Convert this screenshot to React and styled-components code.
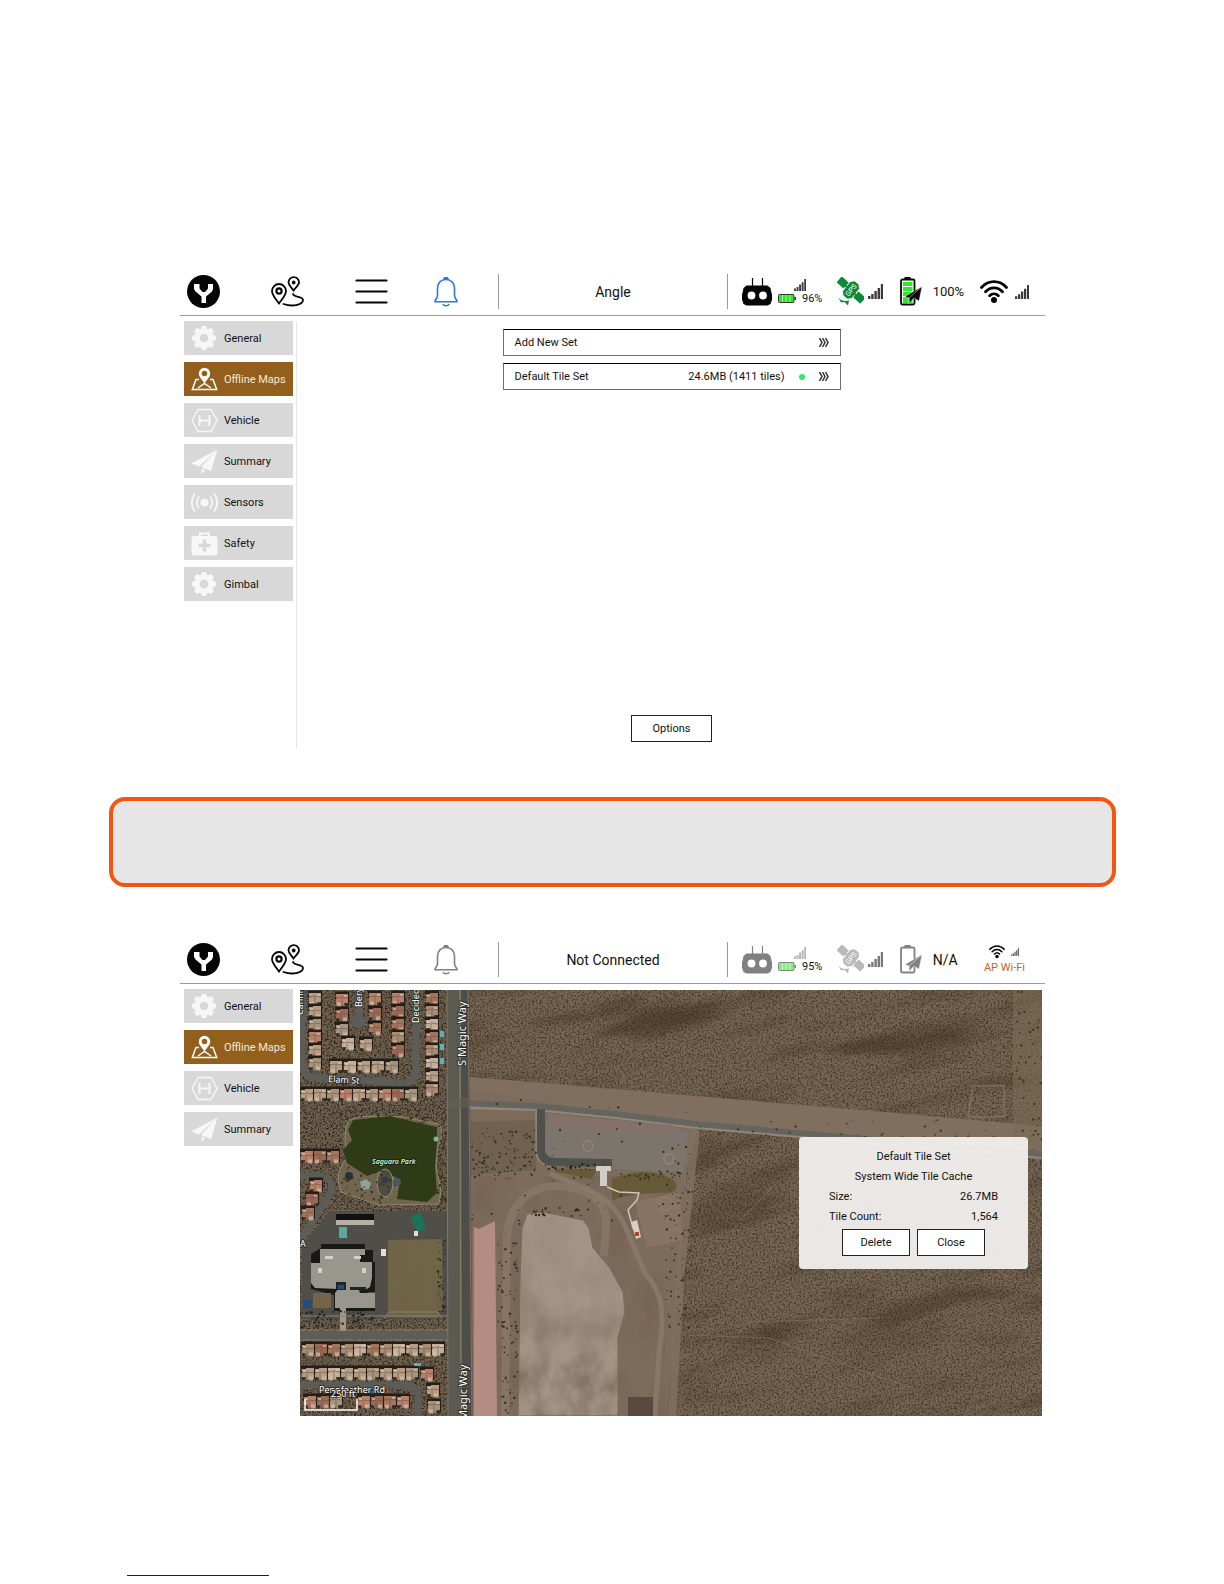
import React from 'react'
import styled, { createGlobalStyle } from 'styled-components'

const colors = {
  black: '#050505',
  text: '#111',
  brown: '#935f1c',
  orange: '#f4560f',
  amber: '#c4681c',
  blue: '#2b78e4',
  green: '#0c8a3a',
  lime: '#2ee82a',
  gray: '#808080',
  grayLight: '#d8d8d8',
  line: '#9b9b9b',
}

const GlobalStyle = createGlobalStyle`
  * {
    box-sizing: border-box;
  }

  body {
    background: #fff;
    color: ${colors.text};
    font-family: Roboto, 'Liberation Sans', sans-serif;
    font-size: 11px;
    margin: 0;
  }

  button {
    color: inherit;
    cursor: pointer;
    font: inherit;
    padding: 0;
  }

  svg {
    display: block;
    flex: none;
  }
`

const Page = styled.main`
  padding: 268px 108px 8px;
`

const Screen = styled.section`
  margin: 0 71px 0 72px;
`

const Header = styled.header`
  align-items: center;
  border-bottom: 1px solid ${colors.line};
  display: grid;
  grid-template-columns: 318fr 230fr 317fr;
  height: 48px;
`

const MainNav = styled.nav`
  align-items: center;
  display: grid;
  grid-template-columns: 84fr 84fr 79fr 64fr;
  justify-items: start;
  padding-left: 7px;
`

const IconButton = styled.button`
  background: none;
  border: 0;
`

const Title = styled.h1`
  border: solid ${colors.line};
  border-width: 0 1px;
  font-size: 14px;
  font-weight: 400;
  line-height: 33px;
  margin: 0;
  padding-top: 2px;
  text-align: center;
`

const StatusBar = styled.div`
  align-items: center;
  display: flex;
  justify-content: space-between;
  padding: 0 16px 0 14px;
`

const StatusGroup = styled.div`
  align-items: center;
  display: flex;
  gap: ${({ $gap }) => $gap}px;
  width: ${({ $width }) => $width}px;
`

const Stack = styled.div`
  align-items: ${({ $align }) => $align};
  display: flex;
  flex: 1;
  flex-direction: column;
  gap: 2px;
`

const StackRow = styled.div`
  align-items: center;
  display: flex;
  gap: 6px;
  line-height: 12px;
  padding-right: ${({ $inset }) => ($inset ? 16 : 0)}px;
`

const StatusText = styled.span`
  color: ${({ $color }) => $color || colors.text};
  font-size: ${({ $size }) => $size || 11}px;
  white-space: nowrap;
`

const Body = styled.div`
  align-items: start;
  display: grid;
  gap: 3px;
  grid-template-columns: 109px 1fr;
  padding: 5px 0 0 4px;
`

const SideNav = styled.nav`
  display: flex;
  flex-direction: column;
  gap: 7px;
`

const SideButton = styled.button`
  align-items: center;
  background: ${({ $active }) => ($active ? colors.brown : colors.grayLight)};
  border: 0;
  color: ${({ $active }) => ($active ? '#f5e9d8' : colors.text)};
  display: flex;
  gap: 6px;
  height: 34px;
  padding-left: 7px;
  white-space: nowrap;
`

const Panel = styled.div`
  align-items: center;
  border-left: 1px solid #e4e4e4;
  display: flex;
  flex-direction: column;
  gap: 7px;
  margin-top: 1px;
  min-height: 426px;
  padding: 7px 0 6px 1px;
`

const TileRow = styled.button`
  align-items: center;
  background: #fff;
  border: 1px solid #6f6f6f;
  border-top-color: #000;
  display: flex;
  gap: 14px;
  height: 27px;
  max-width: 100%;
  padding: 0 11px;
  width: 338px;
`

const TileName = styled.span`
  flex: 1;
  text-align: left;
`

const Dot = styled.span`
  background: #35e468;
  border-radius: 50%;
  height: 6px;
  width: 6px;
`

const OutlineButton = styled.button`
  background: #fff;
  border: 1px solid #222;
  height: 27px;
  width: ${({ $width }) => $width}px;
`

const PanelFooter = styled.div`
  margin-top: auto;
`

const Notice = styled.aside`
  background: #e6e6e6;
  border: 4px solid ${colors.orange};
  border-radius: 16px;
  height: 90px;
  margin: 49px 0 49px 1px;
`

const MapPanel = styled.div`
  margin: 1px 3px 0 4px;
  position: relative;
`

const Dialog = styled.div`
  background: rgba(241, 239, 237, 0.95);
  border-radius: 4px;
  line-height: 20px;
  padding: 10px 30px 13px;
  position: absolute;
  right: 14px;
  text-align: center;
  top: 147px;
  width: 229px;
`

const DialogTitle = styled.h2`
  font-size: 11px;
  font-weight: 400;
  margin: 0;
`

const Facts = styled.dl`
  display: grid;
  grid-template-columns: 1fr auto;
  margin: 0 0 2px;
  text-align: left;

  dd {
    margin: 0;
    text-align: right;
  }
`

const DialogActions = styled.div`
  display: flex;
  gap: 7px;
  justify-content: center;
`

const FootRule = styled.hr`
  border: 0;
  border-top: 1px solid #14148a;
  margin: 159px 0 0 19px;
  width: 142px;
`

const Logo = () => (
  <svg width="33" height="33" viewBox="0 0 33 33">
    <circle cx="16.5" cy="16.5" r="16.5" fill={colors.black} />
    <path d="M7 9h5.500v4.500l3 3.500h2.500l3-3.500V9H26v5l-1 2.500-6 5V28h-4.500v-6.500l-6-5L7 14z" fill="#fff" />
  </svg>
)

const RouteIcon = () => (
  <svg width="33" height="31" viewBox="0 0 33 31" fill="none" stroke={colors.black} strokeWidth="1.800">
    <path d="M8 27.500C5 23 1 19.500 1 15a7 7 0 0 1 14 0c0 4.500-4 8-7 12.500z" />
    <circle cx="8" cy="15" r="2.600" strokeWidth="2.200" />
    <path d="M22.500 14.500c-2-3-5-5-5-8.200a5.200 5.200 0 0 1 10.500 0c0 3.200-3.500 5.200-5.500 8.200z" />
    <circle cx="22.700" cy="6.500" r="1" />
    <path d="M22 18c1 3.500 10 2.500 10 6 0 4-9 7.500-19.500 4" strokeLinecap="round" />
  </svg>
)

const MenuIcon = () => (
  <svg width="33" height="25" viewBox="0 0 33 25" stroke={colors.black} strokeWidth="2.200" strokeLinecap="round">
    <path d="M1.500 1.500h30M1.500 12.500h30M1.500 23.500h30" />
  </svg>
)

const BellIcon = ({ color }) => (
  <svg width="24" height="30" viewBox="0 0 24 30" fill="none" stroke={color} strokeWidth="1.600">
    <path d="M1 24.800c-.7-1.500 2.500-3 2.500-6V11c0-5 3.500-8.500 8.500-8.500s8.500 3.500 8.500 8.500v7.800c0 3 3.200 4.500 2.500 6z" />
    <path d="M10 2.300a2 2 0 0 1 4 0z" fill={color} />
    <path d="M8.800 27.300c1.500 2 4.900 2 6.400 0" />
  </svg>
)

const ControllerIcon = ({ color }) => (
  <svg width="30" height="29" viewBox="0 0 30 29">
    <path d="M10.500 1v9M20.500 1v9" stroke={color} strokeWidth="1.200" />
    <path d="M4.500 8.500h21l3 2.500 1 5 .5 1v6l-.5 1-1 3-3 1.500h-21l-3-1.500-1-3L0 23v-6l.5-1 1-5z" fill={color} />
    <circle cx="9.500" cy="18.500" r="3.900" fill="#fff" />
    <circle cx="21" cy="18.500" r="3.900" fill="#fff" />
  </svg>
)

const SignalIcon = ({ width = 15, color = '#3b3b3b' }) => (
  <svg width={width} height={width} viewBox="0 0 15 15" fill={color}>
    <path d="M0 12h2.400v3H0zM3.200 10h2.400v5H3.200zM6.400 7h2.400v8H6.400zM9.600 4H12v11H9.600zM12.800 0H15v15h-2.200z" />
  </svg>
)

const LinkBattery = ({ muted }) => (
  <svg width="18" height="9" viewBox="0 0 18 9" opacity={muted ? 0.6 : 1}>
    <rect x=".5" y=".5" width="15.500" height="8" rx="1" fill={colors.lime} stroke="#333" />
    <path d="M4.500 1v7M8.200 1v7M12 1v7" stroke="#9af59a" />
    <path d="M16.500 3H18v3h-1.500z" fill="#333" />
  </svg>
)

const GpsIcon = ({ color }) => (
  <svg width="27" height="29" viewBox="0 0 27 29" fill={color}>
    <g transform="rotate(42 14 13)">
      <rect x="-2" y="9" width="9.500" height="8" />
      <rect x="20.500" y="9" width="9.500" height="8" />
      <path d="M6 13.500h17" stroke={color} strokeWidth="2" />
    </g>
    <g transform="rotate(-52 14 13)">
      <path d="M8 7.500h12l3 3v5l-3 3H8l-3-3v-5z" />
      <text x="14" y="15.500" textAnchor="middle" fontSize="7" fill="#fff">
        GPS
      </text>
    </g>
    <path d="M0 18c2 5 6 7 12 5.500L11 28.500 7.500 25l-3.500.5z" />
  </svg>
)

const VehicleBattery = ({ color, level }) => (
  <svg width="22" height="29" viewBox="0 0 22 29">
    <rect x="1" y="2.500" width="13.500" height="25" rx="1.500" fill="#fff" stroke={color} strokeWidth="1.800" />
    <rect x="4.500" y="0" width="6" height="2.500" fill={color} />
    {level && <path d="M3 5h9.500v4H3zM3 10h9.500v4H3zM3 15h9.500v4H3zM3 20h9.500v6H3z" fill={colors.lime} />}
    <path d="M22 9.500L19 24l-5-3-5 5.500V21l-4-1.500z" fill={color} stroke="#fff" strokeWidth=".4" />
    <path d="M22 9.500L9 21v5" stroke="#fff" strokeWidth=".5" fill="none" />
  </svg>
)

const WifiIcon = ({ width = 28 }) => (
  <svg width={width} height={(width * 23) / 28} viewBox="0 0 28 23" fill="none" stroke={colors.black}>
    <g strokeWidth="2.800" strokeLinecap="round">
      <path d="M1.500 7.500C8.500-.3 19.500-.3 26.500 7.500" />
      <path d="M5.500 11.800c5-5.200 12-5.200 17 0" />
      <path d="M9.600 15.800c2.600-2.600 6.200-2.600 8.800 0" />
    </g>
    <circle cx="14" cy="20" r="3" fill={colors.black} stroke="none" />
  </svg>
)

const ChevronsIcon = () => (
  <svg width="10" height="9" viewBox="0 0 10 9" fill="none" stroke="#333" strokeWidth="1.500">
    <path d="M.5 0l2.500 4.500L.5 9M3.500 0L6 4.500 3.500 9M6.500 0L9 4.500 6.500 9" />
  </svg>
)

const SideIcon = ({ children }) => (
  <svg width="27" height="27" viewBox="0 0 27 27" fill="#f7f7f7" stroke="none">
    {children}
  </svg>
)

const GearIcon = () => (
  <SideIcon>
    {[0, 45, 90, 135].map(angle => (
      <path key={angle} d="M11 1h4l1.500 4v16L15 25h-4l-1.500-4V5z" transform={`rotate(${angle} 13 13)`} />
    ))}
    <circle cx="13" cy="13" r="9.500" />
    <circle cx="13" cy="13" r="4.300" fill={colors.grayLight} />
  </SideIcon>
)

const MapsIcon = () => (
  <SideIcon>
    <path d="M13.500 17.500C11 13.500 7.800 11 7.800 7.500a5.700 5.700 0 0 1 11.400 0c0 3.500-3.200 6-5.700 10z" fill="#fff" />
    <circle cx="13.500" cy="7.500" r="2.800" fill={colors.brown} />
    <path d="M8 13.500H5L1.300 23.500h24.400L22 13.500h-3M7 22l6.500-4.500L20 22" fill="none" stroke="#fff" strokeWidth="1.500" />
  </SideIcon>
)

const VehicleIcon = () => (
  <SideIcon>
    <g fill="none" stroke="#f7f7f7">
      <path d="M1 13.500L7 2.500h13l6 11-6 11H7z" strokeWidth="1.400" />
      <path d="M8.500 8v11M18.500 8v11M8.500 13.500h10" strokeWidth="2" />
    </g>
  </SideIcon>
)

const SummaryIcon = () => (
  <SideIcon>
    <path d="M26.500 1.500L0 15.500l8 3zM26.500 1.500L10 19l10 4zM10.500 20.500V26l4-3.800z" />
  </SideIcon>
)

const SensorsIcon = () => (
  <SideIcon>
    <circle cx="13.500" cy="13.500" r="4" />
    <g fill="none" stroke="#f7f7f7" strokeWidth="1.800">
      <path d="M8 7.500c-3 3.500-3 8.500 0 12M19 7.500c3 3.500 3 8.500 0 12" />
      <path d="M4 4.500c-4.200 5.300-4.200 12.700 0 18M23 4.500c4.200 5.300 4.200 12.700 0 18" />
    </g>
  </SideIcon>
)

const SafetyIcon = () => (
  <SideIcon>
    <path d="M9 7V3.500h9V7" fill="none" stroke="#f7f7f7" strokeWidth="2" />
    <rect x=".5" y="6" width="26" height="19.500" rx="3" />
    <path d="M13.500 9.500v12M7.500 15.500h12" stroke={colors.grayLight} strokeWidth="3.500" />
  </SideIcon>
)

const sideIcons = {
  General: GearIcon,
  'Offline Maps': MapsIcon,
  Vehicle: VehicleIcon,
  Summary: SummaryIcon,
  Sensors: SensorsIcon,
  Safety: SafetyIcon,
  Gimbal: GearIcon,
}

// small repeatable generator, so the scattered shrubs stay put between renders
const scatter = (count, seed, [x0, y0, x1, y1]) => {
  let s = seed
  const next = () => {
    s = (s * 16807) % 2147483647
    return s / 2147483647
  }
  return Array.from({ length: count }, () => ({
    x: x0 + next() * (x1 - x0),
    y: y0 + next() * (y1 - y0),
    r: 0.4 + next() * 0.9,
  }))
}

const roofs = ['#b59c85', '#a3745a', '#a8937e', '#c4b09a', '#9c6855', '#b79c80', '#a98b74', '#ba7f6a']

const column = (x, y0, y1, step = 13) => {
  const list = []
  for (let y = y0; y <= y1; y += step) list.push([x, y])
  return list
}

const row = (y, x0, x1, step = 13) => {
  const list = []
  for (let x = x0; x <= x1; x += step) list.push([x, y])
  return list
}

const houses = [
  ...column(9, 3, 68),
  ...column(36, 4, 40, 15),
  ...column(69, 3, 40, 15),
  ...column(92, 3, 64),
  ...column(126, 3, 105),
  [42, 48],
  [60, 49],
  ...row(71, 30, 98, 14),
  ...row(99, 1, 112),
  ...row(161, 1, 27),
  [10, 190],
  [6, 204],
  [2, 218],
  ...row(354, 2, 134),
  ...row(378, 2, 114),
  [121, 379],
  [127, 395],
  [128, 411],
  ...row(406, 4, 30),
  ...row(406, 58, 100),
]

// each lot is a roof with its shadow, a drive and a bit of planting
const House = ({ x, y, roof, flip }) => (
  <g transform={`translate(${x} ${y})`}>
    <path d="M-1-2.500h14v4H-1zM11.500 0h1.500v11h-1.500z" fill="#231f18" />
    <path d={flip ? 'M0 0h12v9H8v2.500H0z' : 'M0 1h4V0h8v11.500H4V9H0z'} fill={roof} />
    <path d={flip ? 'M0 4l6-1 6 1M6 3v8' : 'M0 5l5-1 7 1M5 5v6'} fill="none" stroke="#6a5445" strokeWidth=".6" />
    <path d={flip ? 'M1 8.500h4v4H1z' : 'M7 8.500h4v4H7z'} fill="#cfc1ae" opacity=".7" />
    <path d={flip ? 'M8 1h3v2H8z' : 'M1 2h3v2H1z'} fill="#e0d5c5" opacity=".5" />
    <circle cx={flip ? 10.5 : 1.5} cy="11" r="1.400" fill="#28301c" />
    <circle cx="-.5" cy="4" r="1" fill="#28301c" />
  </g>
)

const Shrubs = ({ items, color = '#39341f' }) => (
  <g fill={color}>
    {items.map(({ x, y, r }, i) => (
      <circle key={i} cx={x} cy={y} r={r} />
    ))}
  </g>
)

const MapLabel = styled.text`
  fill: #fff;
  font-family: 'Noto Sans', 'Open Sans', sans-serif;
  font-size: ${({ $size }) => $size || 9}px;
  paint-order: stroke;
  stroke: rgba(25, 25, 20, 0.65);
  stroke-width: 2px;
`

const ParkLabel = styled(MapLabel)`
  fill: #c9f2c6;
  font-style: italic;
  font-weight: 600;
`

const AerialSvg = styled.svg`
  height: auto;
  width: 100%;
`

const AerialMap = () => (
  <AerialSvg viewBox="0 0 742 426" role="img" aria-label="Aerial map">
    <defs>
      <filter id="grain" x="0" y="0" width="100%" height="100%" colorInterpolationFilters="sRGB">
        <feTurbulence type="fractalNoise" baseFrequency=".55" numOctaves="3" seed="4" />
        <feColorMatrix values="0 0 0 0 .18  0 0 0 0 .14  0 0 0 0 .09  3.200 0 0 0 -1.400" />
      </filter>
      <filter id="ridges" x="0" y="0" width="100%" height="100%" colorInterpolationFilters="sRGB">
        <feTurbulence type="fractalNoise" baseFrequency=".008 .04" numOctaves="4" seed="9" />
        <feColorMatrix values="0 0 0 0 .26  0 0 0 0 .19  0 0 0 0 .12  3 0 0 0 -1.450" />
      </filter>
      <filter id="dust" x="0" y="0" width="100%" height="100%" colorInterpolationFilters="sRGB">
        <feTurbulence type="fractalNoise" baseFrequency=".03 .02" numOctaves="5" seed="2" />
        <feColorMatrix values="0 0 0 0 .42  0 0 0 0 .35  0 0 0 0 .29  2 0 0 0 -.8" />
      </filter>
      <filter id="soften">
        <feGaussianBlur stdDeviation="5 3" />
      </filter>
      <linearGradient id="fade" x2="0" y2="1">
        <stop offset="0" stopColor="#fff" stopOpacity=".15" />
        <stop offset=".5" stopColor="#fff" stopOpacity=".35" />
        <stop offset=".8" stopColor="#fff" />
      </linearGradient>
      <mask id="field">
        <path d="M227 224l16-2 40 8 6 8 4 20 17 20 13 24 2 20-7 26v78H218l2-137 2-50z" fill="url(#fade)" />
      </mask>
    </defs>

    {/* open desert */}
    <rect width="742" height="426" fill="#766653" />
    <g transform="rotate(-14 560 210)">
      <rect x="120" y="-100" width="720" height="640" filter="url(#ridges)" opacity=".4" />
    </g>
    <g fill="#4a3822" opacity=".45" filter="url(#soften)">
      <path d="M222 36q30-14 68-14 30-16 60-14l-30 18-60 8zM288 44q40-14 60-24 50-6 80-14l-20 20-50 22zM520 60q50-20 90-10 30-14 60-4l-60 20z" />
      <path d="M560 330q60-30 120-34l50 8-80 10-60 26zM450 340q30-14 60-8l-40 20z" />
    </g>
    <rect width="742" height="426" filter="url(#grain)" opacity=".65" />

    {/* cleared ground */}
    <path d="M160 86l424 36 158 14v28l-345-25-10 40-20 247H160z" fill="#806e5f" />
    <path d="M160 132l76-2v50l-76 6z" fill="#6b5b4a" opacity=".7" />
    <path d="M168 100l216 34v292H168z" fill="#75624f" opacity=".25" />
    <rect x="168" y="186" width="198" height="240" filter="url(#dust)" opacity=".45" />
    <path d="M713 0h29v158l-29-3z" fill="#7c6a55" opacity=".6" />
    <path d="M673 96h31v31h-36z" fill="none" stroke="#8d7963" strokeWidth="1.500" opacity=".7" />
    <path d="M396 140l-16 148-8 138" fill="none" stroke="#857261" strokeWidth="8" opacity=".8" />
    <path d="M390 390l60-58 130-4M388 345l80 3 150 52M440 230l40-40" fill="none" stroke="#87735d" strokeWidth="1" opacity=".6" />

    {/* tracks around the field */}
    <path d="M205 426l2-180c2-30 22-50 50-50 40 3 50 20 49 40l-2 30" fill="none" stroke="#8a7868" strokeWidth="8" opacity=".8" />
    <path d="M250 184c35 14 60 20 75 52l20 47c18 20 20 40 14 80l-4 63" fill="none" stroke="#8c7a6b" strokeWidth="5" opacity=".8" />
    <path d="M335 212l45-10 2 48-35 8z" fill="#887464" />
    <path d="M227 224l16-2 40 8 6 8 4 20 17 20 13 24 2 20-7 26v78H218l2-137 2-50z" fill="#a39385" stroke="#7c6b58" />
    <g mask="url(#field)">
      <rect x="215" y="220" width="115" height="206" filter="url(#dust)" />
    </g>
    <path d="M174 237l5 2 16-8 2 195h-24z" fill="#b48d82" />
    <path d="M173 240v186" stroke="#9c665d" strokeWidth="1.500" />
    <path d="M328 407h25v19h-25z" fill="#5a4941" />

    {/* access road and lot */}
    <path d="M167 115l70 2 80 8 80 10 345 30" fill="none" stroke="#938677" strokeWidth="8" />
    <path d="M160 113l77 3 80 8 80 10 345 30" fill="none" stroke="#65645e" strokeWidth="6" />
    <path d="M248 124l124 11 16 8-5 39-71-3 1-7-62-4-8-6z" fill="#7c756d" />
    <path d="M250 125l122 11 10 8-80-3-52-5z" fill="#87706a" opacity=".7" />
    <circle cx="288" cy="156" r="5" fill="none" stroke="#8a8278" strokeWidth="2" />
    <circle cx="369" cy="169" r="5" fill="none" stroke="#8d8275" strokeWidth="2" />
    <path d="M241 119v40q0 13 15 13l56 1" fill="none" stroke="#4e514c" strokeWidth="8" />
    <path d="M236 121v40q1 13 15 17" fill="none" stroke="#a19686" />
    <path d="M255 179h42l-5 10-36-7zM312 189q35-14 60 0 10 8-2 14-30-2-58 7z" fill="#665a38" />
    <path d="M296 176h15v5h-4v15h-7v-15h-4z" fill="#d2cdc4" />
    <path d="M307 197l12 5 20 1-2 7-9 10 5 18 5 8" fill="none" stroke="#cfc5b5" strokeWidth="1.500" />
    <path d="M331 232l6-2 4 17-5 2z" fill="#d8d0c4" />
    <path d="M335 242h4v4h-4z" fill="#b2442c" />
    <circle cx="365" cy="214" r="7" fill="none" stroke="#98826f" />
    <Shrubs items={scatter(110, 71, [172, 140, 236, 190])} />
    <Shrubs items={scatter(26, 15, [248, 174, 296, 180])} color="#262c16" />
    <Shrubs items={scatter(24, 27, [325, 182, 380, 190])} color="#2d321a" />
    <Shrubs items={scatter(90, 52, [366, 150, 390, 340])} />
    <Shrubs items={scatter(90, 31, [198, 240, 218, 426])} />
    <Shrubs items={scatter(25, 44, [232, 218, 288, 226])} color="#2d2d18" />
    <Shrubs items={scatter(60, 83, [172, 110, 400, 240])} />
    <Shrubs items={scatter(70, 93, [400, 130, 742, 160])} color="#3f3a22" />
    <Shrubs items={scatter(50, 18, [712, 0, 742, 150])} color="#3f3a22" />

    {/* neighbourhood */}
    <rect width="160" height="426" fill="#6e6150" />
    <rect width="160" height="426" filter="url(#grain)" />
    <g fill="none" stroke="#5c5c58" strokeWidth="7">
      <path d="M2 0v74q0 12 12 13l86 6q16 1 16-12V0" />
      <path d="M59 0v28" />
      <path d="M0 186h22q14 4 8 18L0 250" />
      <path d="M0 395h106q12 1 12 12v19" />
    </g>
    <circle cx="58" cy="31" r="7.500" fill="#5c5c58" />
    {houses.map(([x, y], i) => (
      <House key={i} x={x} y={y} flip={i % 3 === 0} roof={roofs[(i * 5 + (i >> 2)) % roofs.length]} />
    ))}
    <g fill="#55b3bd">
      <rect x="140" y="41" width="4" height="6" />
      <rect x="140" y="54" width="4" height="6" />
      <rect x="140" y="68" width="4" height="6" />
      <rect x="114" y="373" width="7" height="3" />
    </g>

    {/* park */}
    <path d="M46 136q2-10 24-10l34 1 34 7q8 8 0 22l-2 20 5 24-2 14-60 1-38-13q-9-20 8-36-6-10-3-30z" fill="#716550" stroke="#8f8a6c" />
    <path d="M53 130l37-4 33 8 14 3v14l-2 26 2 26-10 9-30-3 3-19-17-10-16 6-20-13-4-13 9-10-4-10z" fill="#2f3b17" />
    <ellipse cx="85" cy="193" rx="8" ry="14" fill="#4f4d42" stroke="#928d74" />
    <circle cx="85" cy="190" r="3.500" fill="#343b4d" />
    <circle cx="49" cy="186" r="4" fill="#22333b" />
    <path d="M60 192l6-3 5 4-2 6-7 1z" fill="#8aa595" />
    <circle cx="97" cy="192" r="4" fill="#4a575f" />
    <circle cx="136" cy="149" r="2.500" fill="#7bb3a5" />
    <Shrubs items={scatter(60, 87, [42, 176, 95, 214])} />
    <Shrubs items={scatter(60, 65, [40, 120, 146, 134])} />
    <Shrubs items={scatter(60, 29, [138, 136, 148, 218])} />

    {/* school */}
    <path d="M30 221h118v108H2v-74z" fill="#504e48" />
    <path d="M36 224h38v6H36z" fill="#11110f" />
    <path d="M36 230h38v5H36z" fill="#b5b1a7" />
    <path d="M39 237h8v11h-8z" fill="#57aa9c" />
    <path d="M111 227l9-5 6 16-9 4z" fill="#197558" />
    <path d="M114 241h4v5h-4zM81 259h5v7h-5z" fill="#e2dfd5" />
    <path d="M88 250l54-1 1 70-6 9-49-1z" fill="#716547" />
    <rect x="88" y="249" width="55" height="79" filter="url(#dust)" opacity=".5" />
    <path d="M21 254h44v6h8v12h2v30h-8l8 5v14H34v-16l-23-6v-35l10-6z" fill="#191917" />
    <path d="M20 259h45v6h-5v7h12v16l-2 9-5 3h-6l1 3h15v15H35v-15l3-4-23-1-4-5v-20h9z" fill="#99968d" />
    <path d="M25 266h8v3h-8zM54 266h7v3h-7zM18 278h4v5h-4zM62 278h4v5h-4z" fill="#d5d1c6" />
    <path d="M36 292h10v8H36zM50 297h16v3H50z" fill="#1c252a" />
    <path d="M38 295h6v4h-6zM3 310h9v8H3z" fill="#254c7d" />
    <path d="M13 303h18v15H13z" fill="#766448" />
    <path d="M40 318h6v23h-6z" fill="#a39786" />
    <path d="M2 326h148M84 329l5-7h48l6 8" fill="none" stroke="#8a8173" />
    <Shrubs items={scatter(90, 37, [2, 319, 84, 340])} color="#24221c" />
    <Shrubs items={scatter(36, 41, [138, 250, 145, 330])} color="#292d18" />
    <path d="M0 345h152" stroke="#5e5d58" strokeWidth="8" />
    <path d="M0 340h150M0 350h150" stroke="#8c8171" />

    {/* main street */}
    <path d="M147 0h20l3 426h-22z" fill="#5b5a50" />
    <path d="M161 0h8l4 426h-12z" fill="#4d4e4a" />
    <path d="M147 0l1 426M168 0l4 426" stroke="#807766" strokeWidth="1" />
    <path d="M160 0l1 426" stroke="#827c63" strokeWidth="1.500" />
    <path d="M148 113h22" stroke="#646057" strokeWidth="10" opacity=".6" />

    <MapLabel transform="rotate(3 28 92)" x="28" y="92">Elam St</MapLabel>
    <MapLabel transform="rotate(-90 62 17)" x="62" y="17">Bery</MapLabel>
    <MapLabel transform="rotate(-90 119 33)" x="119" y="33">Decided</MapLabel>
    <MapLabel transform="rotate(-90 3 25)" x="3" y="25">Cannin</MapLabel>
    <MapLabel $size={11} transform="rotate(-90 166 76)" x="166" y="76">S Magic Way</MapLabel>
    <MapLabel $size={11} transform="rotate(-90 167 439)" x="167" y="439">S Magic Way</MapLabel>
    <MapLabel x="0" y="257">A</MapLabel>
    <MapLabel x="19" y="403">Pennfeather Rd</MapLabel>
    <ParkLabel $size={7} x="72" y="174">Saguaro Park</ParkLabel>
    <MapLabel x="31" y="407">250 ft</MapLabel>
    <path d="M5 409v11h52v-11" fill="none" stroke="#fff" strokeWidth="1.500" />
  </AerialSvg>
)

const TopBar = ({ title, connected, linkBattery, vehicleBattery }) => (
  <Header>
    <MainNav aria-label="Main">
      <IconButton aria-label="Home"><Logo /></IconButton>
      <IconButton aria-label="Missions"><RouteIcon /></IconButton>
      <IconButton aria-label="Menu"><MenuIcon /></IconButton>
      <IconButton aria-label="Notifications">
        <BellIcon color={connected ? colors.blue : colors.gray} />
      </IconButton>
    </MainNav>
    <Title>{title}</Title>
    <StatusBar>
      <StatusGroup $width={80} $gap={6}>
        <ControllerIcon color={connected ? colors.black : colors.gray} />
        <Stack $align="flex-end">
          <StackRow $inset>
            <SignalIcon width={12} color={connected ? undefined : '#b5b5b5'} />
          </StackRow>
          <StackRow>
            <LinkBattery muted={!connected} />
            <StatusText>{linkBattery}</StatusText>
          </StackRow>
        </Stack>
      </StatusGroup>
      <StatusGroup $width={47} $gap={4}>
        <GpsIcon color={connected ? colors.green : '#b9b9b9'} />
        <SignalIcon color={connected ? undefined : '#777'} />
      </StatusGroup>
      <StatusGroup $width={65} $gap={11}>
        <VehicleBattery color={connected ? colors.black : colors.gray} level={connected} />
        <StatusText $size={connected ? 13 : 14}>{vehicleBattery}</StatusText>
      </StatusGroup>
      <StatusGroup $width={49} $gap={7}>
        {connected ? (
          <>
            <WifiIcon />
            <SignalIcon width={14} />
          </>
        ) : (
          <Stack $align="center">
            <StackRow>
              <WifiIcon width={16} />
              <SignalIcon width={8} color="#666" />
            </StackRow>
            <StatusText $color={colors.amber}>AP Wi-Fi</StatusText>
          </Stack>
        )}
      </StatusGroup>
    </StatusBar>
  </Header>
)

const SideMenu = ({ items }) => (
  <SideNav aria-label="Settings">
    {items.map(name => {
      const Icon = sideIcons[name]
      return (
        <SideButton key={name} $active={name === 'Offline Maps'}>
          <Icon />
          {name}
        </SideButton>
      )
    })}
  </SideNav>
)

const App = () => (
  <>
    <GlobalStyle />
    <Page>
      <Screen>
        <TopBar title="Angle" connected linkBattery="96%" vehicleBattery="100%" />
        <Body>
          <SideMenu items={['General', 'Offline Maps', 'Vehicle', 'Summary', 'Sensors', 'Safety', 'Gimbal']} />
          <Panel>
            <TileRow>
              <TileName>Add New Set</TileName>
              <ChevronsIcon />
            </TileRow>
            <TileRow>
              <TileName>Default Tile Set</TileName>
              <span>24.6MB (1411 tiles)</span>
              <Dot />
              <ChevronsIcon />
            </TileRow>
            <PanelFooter>
              <OutlineButton $width={81}>Options</OutlineButton>
            </PanelFooter>
          </Panel>
        </Body>
      </Screen>
      <Notice />
      <Screen>
        <TopBar title="Not Connected" linkBattery="95%" vehicleBattery="N/A" />
        <Body>
          <SideMenu items={['General', 'Offline Maps', 'Vehicle', 'Summary']} />
          <MapPanel>
            <AerialMap />
            <Dialog role="dialog" aria-labelledby="tile-set-title">
              <DialogTitle id="tile-set-title">Default Tile Set</DialogTitle>
              <div>System Wide Tile Cache</div>
              <Facts>
                <dt>Size:</dt>
                <dd>26.7MB</dd>
                <dt>Tile Count:</dt>
                <dd>1,564</dd>
              </Facts>
              <DialogActions>
                <OutlineButton $width={68}>Delete</OutlineButton>
                <OutlineButton $width={68}>Close</OutlineButton>
              </DialogActions>
            </Dialog>
          </MapPanel>
        </Body>
      </Screen>
      <FootRule />
    </Page>
  </>
)

export default App
